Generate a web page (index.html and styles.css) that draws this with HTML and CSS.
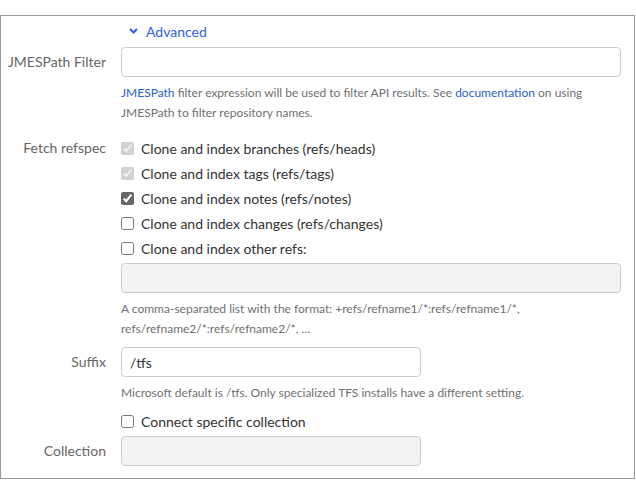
FILE: index.html
```html
<!DOCTYPE html>
<html>
<head>
<meta charset="utf-8">
<link rel="stylesheet" href="styles.css">
</head>
<body>
<div class="box">
  <div class="advanced">
    <svg class="chev" width="9" height="6" viewBox="0 0 9 6"><path d="M1 1 L4.5 4.5 L8 1" fill="none" stroke="#2f5ee8" stroke-width="2"/></svg>
    <span>Advanced</span>
  </div>

  <div class="row">
    <label class="label mid">JMESPath Filter</label>
    <div class="field">
      <input class="text wide" type="text">
      <p class="help"><a>JMESPath</a> filter expression will be used to filter API results. See <a>documentation</a> on using<br>JMESPath to filter repository names.</p>
    </div>
  </div>

  <div class="row refspec">
    <label class="label top">Fetch refspec</label>
    <div class="field">
      <label class="check"><input type="checkbox" checked disabled> Clone and index branches (refs/heads)</label>
      <label class="check"><input type="checkbox" checked disabled> Clone and index tags (refs/tags)</label>
      <label class="check"><input type="checkbox" checked> Clone and index notes (refs/notes)</label>
      <label class="check"><input type="checkbox"> Clone and index changes (refs/changes)</label>
      <label class="check"><input type="checkbox"> Clone and index other refs:</label>
      <input class="text wide disabled" type="text" disabled>
      <p class="help">A comma-separated list with the format: +refs/refname1/*:refs/refname1/*,<br>refs/refname2/*:refs/refname2/*, ...</p>
    </div>
  </div>

  <div class="row suffix">
    <label class="label mid">Suffix</label>
    <div class="field">
      <input class="text narrow" type="text" value="/tfs">
      <p class="help single">Microsoft default is /tfs. Only specialized TFS installs have a different setting.</p>
      <label class="check"><input type="checkbox"> Connect specific collection</label>
    </div>
  </div>

  <div class="row collection">
    <label class="label mid">Collection</label>
    <div class="field">
      <input class="text narrow disabled" type="text" disabled>
    </div>
  </div>
</div>
</body>
</html>
```

FILE: styles.css
```css
html, body {
  margin: 0;
  padding: 0;
  background: #fff;
}
body {
  font-family: "Lato", "Open Sans", sans-serif;
  font-size: 14px;
  color: #333;
}
.box {
  margin-top: 15px;
  width: 633px;
  border: 1px solid #9a9a9a;
  padding: 6px 0 12px 0;
}
.advanced {
  display: flex;
  align-items: center;
  height: 18px;
  padding-left: 128px;
  gap: 8px;
  color: #2f5ee8;
  font-size: 14px;
  margin-bottom: 7px;
}
.row {
  display: flex;
}
.label {
  width: 105px;
  flex: none;
  text-align: right;
  padding-right: 15px;
  color: #666;
  font-size: 14px;
  line-height: 30px;
}
.label.top {
  line-height: 20px;
  margin-top: 2px;
}
.field {
  flex: 1;
  min-width: 0;
  padding-right: 12px;
}
.text {
  display: block;
  box-sizing: border-box;
  height: 30px;
  border: 1px solid #c9ccd3;
  border-radius: 4px;
  background: #fff;
  font-family: inherit;
  font-size: 14px;
  color: #333;
  padding: 0 8px;
  margin: 0;
  outline: none;
}
.text.wide { width: 500px; }
.text.narrow { width: 300px; }
.text.disabled { background: #f2f3f5; }
.help {
  margin: 6px 0 0 0;
  font-size: 12px;
  line-height: 20px;
  color: #707070;
}
.help a {
  color: #1f5fcc;
}
.row.refspec {
  margin-top: 13px;
}
.check {
  display: flex;
  align-items: center;
  height: 25px;
  gap: 7px;
  color: #333;
}
.check input {
  margin: 0;
  width: 13px;
  height: 13px;
  accent-color: #666;
}
.refspec .text {
  margin-top: 2px;
}
.row.suffix {
  margin-top: 8px;
}
.suffix .check {
  margin-top: 6px;
}
.row.collection {
  margin-top: 2px;
}
```
